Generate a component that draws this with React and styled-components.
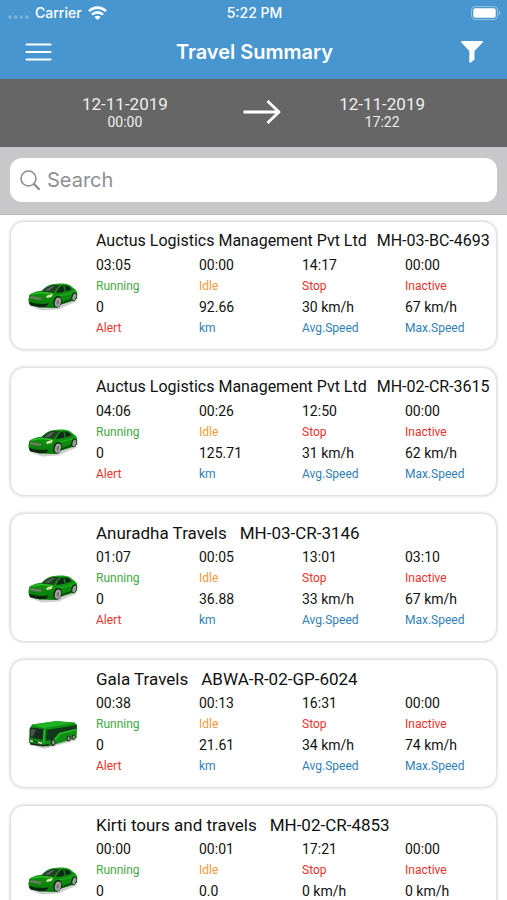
import React from 'react';
import styled, { createGlobalStyle } from "styled-components";

const GlobalStyle = createGlobalStyle`
  * {
    box-sizing: border-box;
  }
  body {
    margin: 0;
    background: #fff;
    color: #111;
    font-family: Roboto, "Liberation Sans", sans-serif;
  }
`;

const Screen = styled.div`
  display: flex;
  flex-direction: column;
  height: 100vh;
`;

const Header = styled.header`
  flex: none;
  background: #4896cf;
  color: #fff;
  font-family: Inter, "Liberation Sans", sans-serif;
`;
const StatusBar = styled.div`
  display: grid;
  grid-template-columns: 1fr auto 1fr;
  align-items: center;
  height: 25px;
  padding: 0 6px 0 8px;
  font-size: 14px;
  font-weight: 500;
`;
const Carrier = styled.div`
  display: flex;
  align-items: center;
  gap: 6px;
`;
const Battery = styled.svg`
  justify-self: end;
`;
const NavBar = styled.div`
  display: grid;
  grid-template-columns: 1fr auto 1fr;
  align-items: center;
  height: 54px;
  padding: 0 23px 0 25px;
`;
const Heading = styled.h1`
  margin: 0;
  font-size: 20px;
  font-weight: 600;
`;
const IconButton = styled.button`
  display: flex;
  justify-self: ${props => props.$end ? "end" : "start"};
  padding: 0;
  border: none;
  background: none;
  color: inherit;
  cursor: pointer;
`;

const RangeBar = styled.section`
  flex: none;
  display: flex;
  align-items: center;
  justify-content: space-between;
  height: 68px;
  padding: 0 82px 2px;
  background: #666;
  color: #eee;
`;
const RangeButton = styled.button`
  padding: 0;
  border: none;
  background: none;
  color: inherit;
  font-family: inherit;
  font-size: 14px;
  line-height: 16px;
  cursor: pointer;
`;
const RangeDate = styled.span`
  display: block;
  font-size: 17px;
  line-height: 20px;
`;
const Arrow = styled.svg`
  margin-left: 16px;
`;

const SearchBar = styled.div`
  flex: none;
  padding: 11px 10px 12px;
  background: #c8c8ca;
  border-bottom: 1px solid #b8b8ba;
`;
const SearchBox = styled.label`
  display: flex;
  align-items: center;
  gap: 7px;
  height: 44px;
  padding: 0 10px;
  border-radius: 12px;
  background: #fff;
`;
const SearchInput = styled.input`
  flex: 1;
  min-width: 0;
  padding: 0;
  border: none;
  outline: none;
  background: none;
  color: #333;
  font-family: Inter, "Liberation Sans", sans-serif;
  font-size: 20px;

  &::placeholder {
    color: #8e8e93;
    opacity: 1;
  }
`;

const List = styled.main`
  flex: 1;
  min-height: 0;
  display: flex;
  flex-direction: column;
  gap: 17px;
  padding: 6px 10px;
  overflow-y: auto;
  scrollbar-width: none;
`;
const Card = styled.article`
  flex: none;
  display: grid;
  grid-template-columns: 50px minmax(0, 1fr);
  column-gap: 18px;
  align-items: center;
  padding: 7px 7px 10px 17px;
  border: 1px solid #e2e2e2;
  border-radius: 14px;
  background: #fff;
  box-shadow: 0 0 3px rgba(0, 0, 0, 0.2);
`;
const CardTitle = styled.h2`
  grid-column: 2;
  display: flex;
  gap: ${props => props.$compact ? "10px" : "13px"};
  margin: 0 0 2px;
  font-size: ${props => props.$compact ? "16px" : "17px"};
  font-weight: 400;
  line-height: 24px;
  white-space: nowrap;
`;
const Stats = styled.dl`
  display: grid;
  grid-template-columns: repeat(3, 1fr) 84px;
  margin: 0;
  line-height: 21px;
`;
const Stat = styled.div`
  display: flex;
  flex-direction: column-reverse;
`;
const StatLabel = styled.dt`
  color: ${props => props.$color};
  font-size: 12px;
`;
const StatValue = styled.dd`
  margin: 0;
  font-size: 14px;
`;

const colors = {
  green: "#43a845",
  orange: "#f2993c",
  red: "#e8332d",
  blue: "#2f80b5",
};

const columns = [
  { key: "running", label: "Running", color: colors.green },
  { key: "idle", label: "Idle", color: colors.orange },
  { key: "stop", label: "Stop", color: colors.red },
  { key: "inactive", label: "Inactive", color: colors.red },
  { key: "alert", label: "Alert", color: colors.red },
  { key: "km", label: "km", color: colors.blue },
  { key: "avg", label: "Avg.Speed", color: colors.blue },
  { key: "max", label: "Max.Speed", color: colors.blue },
];

const vehicles = [
  {
    owner: "Auctus Logistics Management Pvt Ltd", plate: "MH-03-BC-4693", type: "car",
    running: "03:05", idle: "00:00", stop: "14:17", inactive: "00:00",
    alert: "0", km: "92.66", avg: "30 km/h", max: "67 km/h",
  },
  {
    owner: "Auctus Logistics Management Pvt Ltd", plate: "MH-02-CR-3615", type: "car",
    running: "04:06", idle: "00:26", stop: "12:50", inactive: "00:00",
    alert: "0", km: "125.71", avg: "31 km/h", max: "62 km/h",
  },
  {
    owner: "Anuradha Travels", plate: "MH-03-CR-3146", type: "car",
    running: "01:07", idle: "00:05", stop: "13:01", inactive: "03:10",
    alert: "0", km: "36.88", avg: "33 km/h", max: "67 km/h",
  },
  {
    owner: "Gala Travels", plate: "ABWA-R-02-GP-6024", type: "bus",
    running: "00:38", idle: "00:13", stop: "16:31", inactive: "00:00",
    alert: "0", km: "21.61", avg: "34 km/h", max: "74 km/h",
  },
  {
    owner: "Kirti tours and travels", plate: "MH-02-CR-4853", type: "car",
    running: "00:00", idle: "00:01", stop: "17:21", inactive: "00:00",
    alert: "0", km: "0.0", avg: "0 km/h", max: "0 km/h",
  },
];

const SignalDots = () => (
  <svg width="21" height="14" viewBox="0 0 21 14" fill="#fff" opacity="0.3" aria-hidden="true">
    <circle cx="2" cy="11" r="1.7" />
    <circle cx="7.7" cy="11" r="1.7" />
    <circle cx="13.3" cy="11" r="1.7" />
    <circle cx="19" cy="11" r="1.7" />
  </svg>
);

const WifiIcon = () => (
  <svg width="19" height="14" viewBox="0 0 19 14" fill="none" stroke="#fff" strokeWidth="2.6" aria-hidden="true">
    <path d="M1 5.1C5.8.4 13.2.4 18 5.1" />
    <path d="M4 8.6c3.1-3 7.9-3 11 0" />
    <path d="M6.3 10.9c1.8-1.7 4.6-1.7 6.4 0L9.5 14z" fill="#fff" stroke="none" />
  </svg>
);

const BatteryIcon = () => (
  <Battery width="30" height="14" viewBox="0 0 30 14" role="img" aria-label="Battery full">
    <rect x="0.5" y="0.5" width="26" height="13" rx="3.5" fill="none" stroke="#fff" strokeOpacity="0.4" />
    <rect x="2.3" y="2.3" width="22.4" height="9.4" rx="2" fill="#fff" />
    <path d="M28 4.8c1.7.7 1.7 3.7 0 4.4z" fill="#fff" opacity="0.5" />
  </Battery>
);

const MenuIcon = () => (
  <svg width="27" height="20" viewBox="0 0 27 20" stroke="#fff" strokeWidth="2" strokeLinecap="round">
    <path d="M1.5 2.5h24M1.5 10h24M1.5 17.5h24" />
  </svg>
);

const FilterIcon = () => (
  <svg width="24" height="24" viewBox="0 0 24 24" fill="#fff">
    <path d="M1.9 1h20.2c.9 0 1.2.9.6 1.5L14.5 11v8.5L10.5 22.8c-.6.4-1.2 0-1.2-.7V11L1.3 2.5C.7 1.9 1 1 1.9 1z" />
  </svg>
);

const ArrowIcon = () => (
  <Arrow width="40" height="26" viewBox="0 0 40 26" fill="none" stroke="#fff" strokeWidth="2.8" aria-hidden="true">
    <path d="M1.5 13H37M25.5 2L37 13L25.5 24" strokeLinejoin="round" />
  </Arrow>
);

const SearchIcon = () => (
  <svg width="20" height="22" viewBox="0 0 20 22" fill="none" stroke="#8e8e93" aria-hidden="true">
    <circle cx="8.5" cy="9.5" r="7.5" strokeWidth="1.6" />
    <path d="M14 15l4.8 5" strokeWidth="2.4" strokeLinecap="round" />
  </svg>
);

const CarIcon = () => (
  <svg width="50" height="30" viewBox="0 0 50 30" role="img" aria-label="Car">
    <defs>
      <linearGradient id="carPaint" x1="0" y1="0" x2="0" y2="1">
        <stop offset="0" stopColor="#13a013" />
        <stop offset="1" stopColor="#067a08" />
      </linearGradient>
    </defs>
    <path d="M2 24l12 4.5 17-1 8-4 10-4-3-3z" fill="#888" opacity="0.4" />
    <path d="M1.2 13C3.5 10.5 8 9.2 13.5 8.7C17 5.5 20 3 24 2.2C30 1.1 37 1.1 40.5 2.6C43.5 4 45.5 6.5 48.3 8.5C49.5 10.5 49.6 14 48.8 17L44.5 19L33.5 22.5L27 26L12 25.5L3 23.5C1 22.5.3 19.5.5 17z" fill="url(#carPaint)" />
    <path d="M13.5 9.5C17 6 20.5 3.7 24.5 3L32.5 3.2C29 5 27.5 8 26 10.8C22 10 17.5 9.6 13.5 9.5z" fill="#243c28" />
    <path d="M16.5 8.5l7-4.5 3 .2-5.5 4.8z" fill="#4a6650" />
    <path d="M28 11C29.5 7.5 31.5 4.5 34.5 3.3L40 3.7C42 5 43 6.3 43.7 7.5C39 9.5 34 10.5 28 11z" fill="#11281a" />
    <path d="M35.8 3.5l1.5 6" stroke="#0f8a12" strokeWidth="1.2" />
    <path d="M3.5 12.3C10 10 18 10.5 24.5 12.2" fill="none" stroke="#34c32f" strokeWidth="1.2" />
    <path d="M30 14C37 13 43 11.5 48 9.5" fill="none" stroke="#26b526" />
    <path d="M1.5 13.5l12.5 1.8-1.5 3.4L2 16.7z" fill="#4d7145" />
    <path d="M1.8 15.2l11.2 1.7" stroke="#8fa888" strokeWidth="0.6" />
    <path d="M1.2 19.8l6 1.6 8.5.6 5-.8-2.5 3.5-6.7.5-9.5-2z" fill="#0d2410" />
    <path d="M18.5 13.8l6.5-2-1.5 3.2-5 1z" fill="#dfe8b0" />
    <path d="M33 20.5l10-3.5v1.5l-10 3.5z" fill="#0a3d0d" />
    <ellipse cx="29.5" cy="19.8" rx="4.2" ry="6" fill="#12260f" transform="rotate(14 29.5 19.8)" />
    <ellipse cx="29.9" cy="20.2" rx="3" ry="4.7" fill="#a3a3a3" transform="rotate(14 29.9 20.2)" />
    <ellipse cx="29.9" cy="20.2" rx="1.3" ry="2.5" fill="#777" transform="rotate(14 29.9 20.2)" />
    <ellipse cx="46" cy="14.8" rx="2.6" ry="4.5" fill="#12260f" transform="rotate(14 46 14.8)" />
    <ellipse cx="46.3" cy="15" rx="1.8" ry="3.5" fill="#9c9c9c" transform="rotate(14 46.3 15)" />
  </svg>
);

const BusIcon = () => (
  <svg width="50" height="30" viewBox="0 0 50 30" role="img" aria-label="Bus">
    <path d="M2 25l14 4L49 20l-4-4z" fill="#888" opacity="0.4" />
    <path d="M1.5 9L4 4.5L28 1L46.5 2.5L49 5L48.7 18L20 26.5L4 24.5L1 22.5z" fill="#0f8f14" />
    <path d="M3.5 4.8L28 1.3L46.5 3L16 8z" fill="#1fb323" />
    <path d="M2 7.5L15.5 9L14.5 20L2 17.5z" fill="#1b2b21" />
    <path d="M3 9l5 .8-3.5 7-2-.5z" fill="#46594e" />
    <path d="M18.5 10L48.5 5V9L31 12.8L24.5 20L18 20.5z" fill="#12391a" />
    <path d="M16.5 9l-1 14.5M48 9.5L32 13.5L26 21" fill="none" stroke="#28bd2b" strokeWidth="1.3" />
    <path d="M1.5 19l13 2.5v3L2 22z" fill="#0b6410" />
    <path d="M2 20l3 .6v1.6L2 21.5zM10 21.6l4 .7v1.6l-4-.7z" fill="#d2e0bd" />
    <path d="M2 23.8l13 2 6-1.3" fill="none" stroke="#182219" strokeWidth="1.5" />
    <ellipse cx="25" cy="22.5" rx="2.3" ry="3.4" fill="#222" />
    <ellipse cx="25.3" cy="22.5" rx="1.3" ry="2.3" fill="#999" />
    <ellipse cx="40.5" cy="18.5" rx="1.9" ry="3" fill="#222" />
    <ellipse cx="40.7" cy="18.5" rx="1.1" ry="2" fill="#999" />
    <ellipse cx="45.5" cy="17.2" rx="1.8" ry="2.8" fill="#222" />
    <ellipse cx="45.7" cy="17.2" rx="1" ry="1.8" fill="#999" />
  </svg>
);

const VehicleCard = ({ vehicle }) => (
  <Card>
    <CardTitle $compact={vehicle.owner.length > 30}>
      <span>{vehicle.owner}</span>
      <span>{vehicle.plate}</span>
    </CardTitle>
    {vehicle.type === "bus" ? <BusIcon /> : <CarIcon />}
    <Stats>
      {columns.map(({ key, label, color }) => (
        <Stat key={key}>
          <StatLabel $color={color}>{label}</StatLabel>
          <StatValue>{vehicle[key]}</StatValue>
        </Stat>
      ))}
    </Stats>
  </Card>
);

const App = () => {
  return (
    <Screen>
      <GlobalStyle />
      <Header>
        <StatusBar>
          <Carrier>
            <SignalDots />
            <span>Carrier</span>
            <WifiIcon />
          </Carrier>
          <span>5:22 PM</span>
          <BatteryIcon />
        </StatusBar>
        <NavBar>
          <IconButton aria-label="Menu"><MenuIcon /></IconButton>
          <Heading>Travel Summary</Heading>
          <IconButton $end aria-label="Filter"><FilterIcon /></IconButton>
        </NavBar>
      </Header>
      <RangeBar>
        <RangeButton>
          <RangeDate>12-11-2019</RangeDate>
          00:00
        </RangeButton>
        <ArrowIcon />
        <RangeButton>
          <RangeDate>12-11-2019</RangeDate>
          17:22
        </RangeButton>
      </RangeBar>
      <SearchBar>
        <SearchBox>
          <SearchIcon />
          <SearchInput type="search" placeholder="Search" aria-label="Search" />
        </SearchBox>
      </SearchBar>
      <List>
        {vehicles.map(vehicle => (
          <VehicleCard key={vehicle.plate} vehicle={vehicle} />
        ))}
      </List>
    </Screen>
  );
};

export default App;
